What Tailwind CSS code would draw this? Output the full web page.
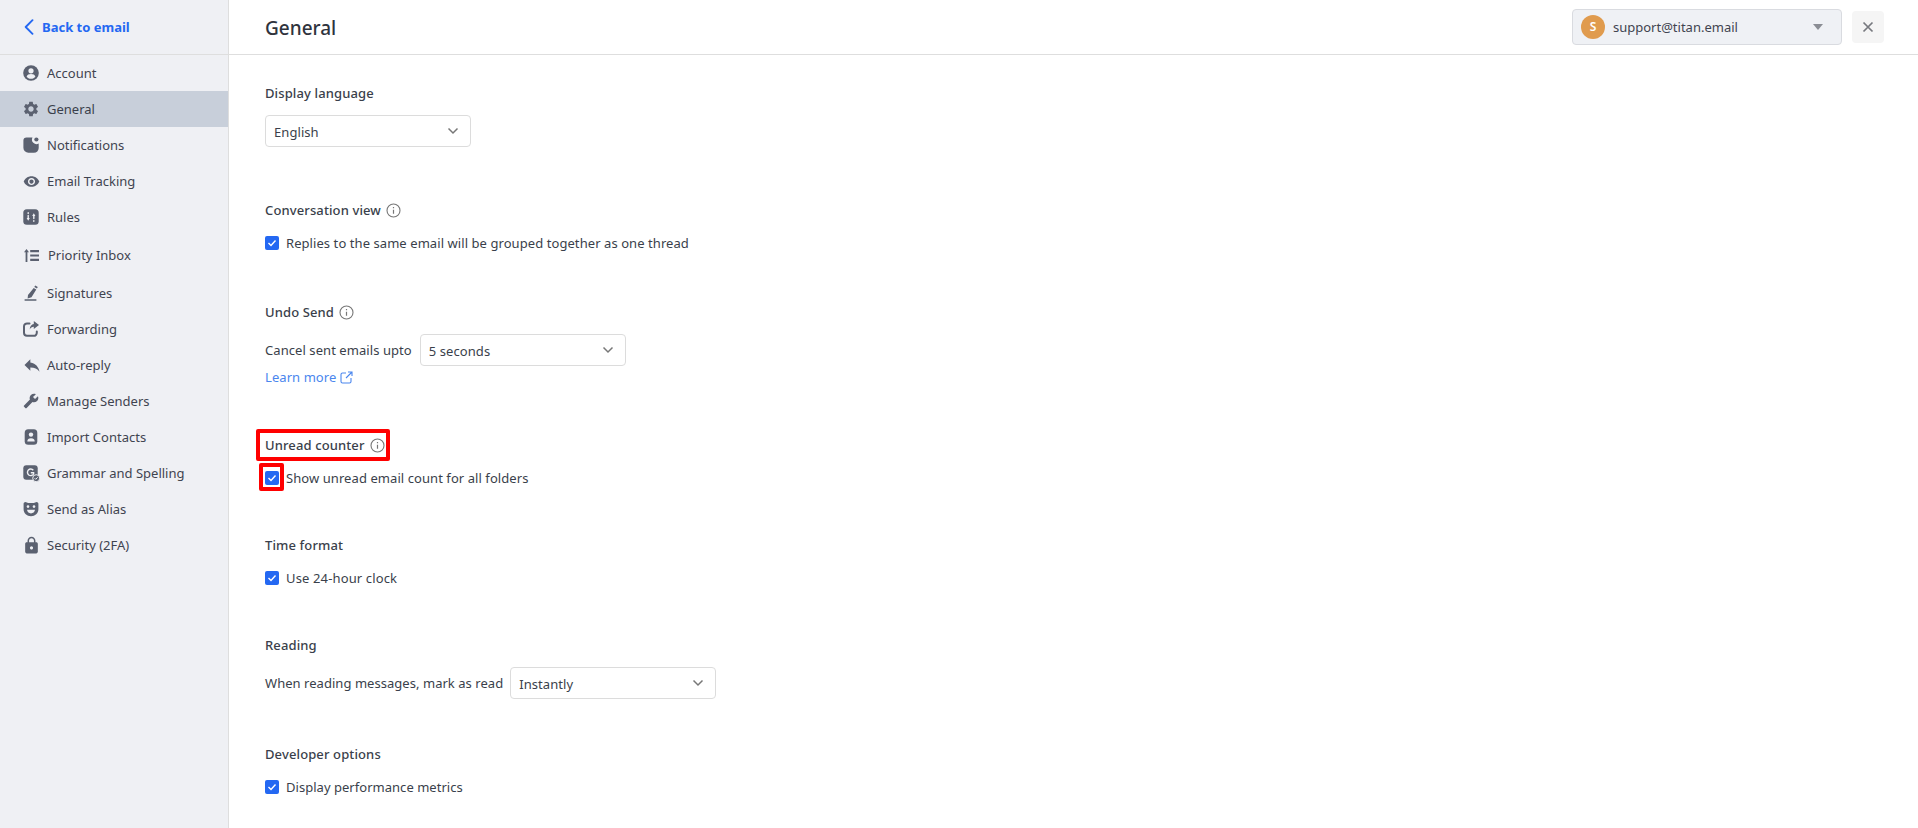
<!DOCTYPE html>
<html lang="en">
<head>
<meta charset="utf-8">
<title>General</title>
<script src="https://cdn.jsdelivr.net/npm/@tailwindcss/browser@4"></script>
</head>
<body class="bg-white font-['Noto_Sans','Liberation_Sans',sans-serif] text-[13px] leading-5 text-[#3a3f4b] overflow-hidden">
<div class="flex h-[828px] w-[1918px]">
  <aside class="w-[229px] shrink-0 h-full bg-[#eff0f4] border-r border-[#dedede]">
    <a class="h-[55px] flex items-center gap-[8px] pl-[24px] border-b border-[#dedede] text-[#2468f2] font-bold">
      <svg width="10" height="16" viewBox="0 0 10 16" fill="none" stroke="#2468f2" stroke-width="1.900" stroke-linecap="round" stroke-linejoin="round"><path d="M8.500 1.200 1.700 8l6.800 6.800"/></svg>
      <span>Back to email</span>
    </a>
    <nav class="flex flex-col">
      <a class="h-9 flex items-center gap-[8px] pl-[23px] text-[#3f4450]"><svg class="w-4 h-4 shrink-0" viewBox="0 0 16 16"><circle cx="8" cy="8" r="7.800" fill="#5b6170"/><circle cx="8" cy="5.800" r="2.600" fill="#eff0f4"/><path d="M3.600 11.400c.6-1.700 2.100-2.500 4.400-2.500s3.800.8 4.400 2.500c-.9 1.500-2.500 2.400-4.400 2.400s-3.500-.9-4.400-2.400z" fill="#eff0f4"/></svg><span>Account</span></a>
      <a class="h-9 flex items-center gap-[7px] pl-[22px] bg-[#c8cfda] text-[#3a3f4b]"><svg class="w-[18px] h-[18px] shrink-0" viewBox="0 0 24 24" fill="#5b6170"><path d="M19.140 12.940c.04-.3.06-.61.06-.94 0-.32-.02-.64-.07-.94l2.030-1.580c.18-.14.23-.41.12-.61l-1.920-3.320c-.12-.22-.37-.29-.59-.22l-2.390.96c-.5-.38-1.030-.7-1.620-.94l-.36-2.540c-.04-.24-.24-.41-.48-.41h-3.840c-.24 0-.43.17-.47.41l-.36 2.540c-.59.24-1.130.57-1.620.94l-2.390-.96c-.22-.08-.47 0-.59.22L2.740 8.870c-.12.21-.08.47.12.61l2.030 1.580c-.05.3-.09.63-.09.94s.02.64.07.94l-2.030 1.580c-.18.14-.23.41-.12.61l1.920 3.320c.12.22.37.29.59.22l2.390-.96c.5.38 1.030.7 1.620.94l.36 2.540c.05.24.24.41.48.41h3.840c.24 0 .44-.17.47-.41l.36-2.540c.59-.24 1.130-.56 1.620-.94l2.390.96c.22.08.47 0 .59-.22l1.920-3.320c.12-.22.07-.47-.12-.61l-2.010-1.580zM12 15.600c-1.980 0-3.600-1.620-3.600-3.600s1.620-3.600 3.600-3.600 3.600 1.620 3.600 3.600-1.620 3.600-3.600 3.600z"/></svg><span>General</span></a>
      <a class="h-9 flex items-center gap-[8px] pl-[23px] text-[#3f4450]"><svg class="w-4 h-4 shrink-0" viewBox="0 0 16 16" fill="#5b6170"><path d="M3.500.4h6a4.600 4.600 0 0 0 6.200 6.200V11a4.800 4.800 0 0 1-4.800 4.800H5.400A5 5 0 0 1 .4 10.800V3.500A3.100 3.100 0 0 1 3.500.4z"/><circle cx="13.400" cy="2.500" r="2.100"/></svg><span>Notifications</span></a>
      <a class="h-9 flex items-center gap-[7px] pl-[23px] text-[#3f4450]"><svg class="w-[17px] h-[17px] shrink-0" viewBox="0 0 24 24" fill="#5b6170"><path d="M12 4.500C7 4.500 2.730 7.610 1 12c1.730 4.390 6 7.500 11 7.500s9.270-3.110 11-7.500c-1.730-4.390-6-7.500-11-7.500zM12 17c-2.760 0-5-2.240-5-5s2.240-5 5-5 5 2.240 5 5-2.240 5-5 5zm0-8c-1.660 0-3 1.340-3 3s1.340 3 3 3 3-1.340 3-3-1.340-3-3-3z"/></svg><span>Email Tracking</span></a>
      <a class="h-9 flex items-center gap-[8px] pl-[23px] text-[#3f4450]"><svg class="w-4 h-4 shrink-0" viewBox="0 0 16 16"><rect x=".3" y=".3" width="15.400" height="15.400" rx="3.500" fill="#5b6170"/><path d="M5.200 3.800v.6M5.200 6.500v3M10.800 6.500v3M10.800 11.600v.6" stroke="#eff0f4" stroke-width="1.400" stroke-linecap="round" fill="none"/><path d="M3.600 9h3.200l-1.600 2.800zM9.200 7h3.200l-1.600-2.800z" fill="#eff0f4"/></svg><span>Rules</span></a>
      <a class="h-[38px] mt-px flex items-center gap-[9px] pl-[24px] text-[#3f4450]"><svg class="w-[15px] h-[13px] shrink-0" viewBox="0 0 15 13" fill="#5b6170"><path d="M2.500 0 5 3.200H3.400V13H1.600V3.200H0zM6.200 1h8.800v2.200H6.200zM6.200 5.400h8.800v2.200H6.200zM6.200 9.800h8.800V12H6.200z"/></svg><span>Priority Inbox</span></a>
      <a class="h-9 mt-px flex items-center gap-[8px] pl-[23px] text-[#3f4450]"><svg class="w-4 h-4 shrink-0" viewBox="0 0 16 16" fill="#5b6170"><path d="M12.200.4 14.800 2l-.9 1.500-2.600-1.600zM10.700 3l2.600 1.600-4.800 7.600-3.900 1.200.4-3.300zM1.600 14.200h11.800v1.500H1.600z"/></svg><span>Signatures</span></a>
      <a class="h-9 flex items-center gap-[8px] pl-[23px] text-[#3f4450]"><svg class="w-4 h-4 shrink-0" viewBox="0 0 16 16" fill="none"><path d="M6.500 2.400H4A3 3 0 0 0 1 5.400v6.400a3 3 0 0 0 3 3h6.800a3 3 0 0 0 3-3V10.500" stroke="#5b6170" stroke-width="2" stroke-linecap="round"/><path d="M10.800 0 16 4l-5.200 4V5.700c-1.800 0-3.200.8-4.100 2.700.2-3.200 1.800-5.200 4.100-5.500z" fill="#5b6170"/></svg><span>Forwarding</span></a>
      <a class="h-9 flex items-center gap-[5px] pl-[22px] text-[#3f4450]"><svg class="w-5 h-5 shrink-0" viewBox="0 0 24 24" fill="#5b6170"><path d="M10 9V5l-7 7 7 7v-4.100c5 0 8.500 1.600 11 5.100-1-5-4-10-11-11z"/></svg><span>Auto-reply</span></a>
      <a class="h-9 flex items-center gap-[8px] pl-[23px] text-[#3f4450]"><svg class="w-4 h-4 shrink-0 -scale-x-100" viewBox="0 0 24 24" fill="#5b6170"><path d="M22.700 19l-9.100-9.100c.9-2.300.4-5-1.500-6.900-2-2-5-2.400-7.400-1.300L9 6 6 9 1.600 4.700C.4 7.100.9 10.100 2.900 12.100c1.900 1.900 4.600 2.400 6.900 1.500l9.100 9.100c.4.400 1 .4 1.400 0l2.300-2.300c.5-.4.5-1.100.1-1.400z"/></svg><span>Manage Senders</span></a>
      <a class="h-9 flex items-center gap-[8px] pl-[23px] text-[#3f4450]"><svg class="w-4 h-4 shrink-0" viewBox="0 0 16 16"><rect x="1.700" y=".3" width="12.600" height="15.400" rx="3.500" fill="#5b6170"/><circle cx="8" cy="5.600" r="2.200" fill="#eff0f4"/><path d="M4.300 12.400c0-2.200 1.400-3.200 3.700-3.200s3.700 1 3.700 3.200z" fill="#eff0f4"/></svg><span>Import Contacts</span></a>
      <a class="h-9 flex items-center gap-[8px] pl-[23px] text-[#3f4450]"><svg class="w-4 h-4 shrink-0 overflow-visible" viewBox="0 0 16 16"><rect x=".3" y=".3" width="14.400" height="14.400" rx="3" fill="#5b6170"/><path d="M10.300 5.200A3.300 3.300 0 1 0 10.600 9V7.800H7.800" stroke="#eff0f4" stroke-width="1.400" fill="none"/><circle cx="13.200" cy="13.200" r="3.500" fill="#5b6170" stroke="#eff0f4" stroke-width="1"/><path d="m11.600 13.200 1.100 1.100 2-2" stroke="#eff0f4" stroke-width="1" fill="none"/></svg><span>Grammar and Spelling</span></a>
      <a class="h-9 flex items-center gap-[8px] pl-[23px] text-[#3f4450]"><svg class="w-4 h-4 shrink-0" viewBox="0 0 16 16"><path d="M2.500.9c1.800.9 3.500 1.200 5.500 1.200S11.700 1.800 13.500.9c1 0 1.900.7 1.900 1.800v5.500c0 4-3.300 7-7.400 7S.6 12.200.6 8.200V2.700C.6 1.600 1.500.9 2.500.9z" fill="#5b6170"/><circle cx="5" cy="5.600" r="1.300" fill="#eff0f4"/><circle cx="11" cy="5.600" r="1.300" fill="#eff0f4"/><path d="M4 8.800h8c-.3 2.200-2 3.600-4 3.600s-3.700-1.400-4-3.600z" fill="#eff0f4"/></svg><span>Send as Alias</span></a>
      <a class="h-9 flex items-center gap-[6px] pl-[22px] text-[#3f4450]"><svg class="w-[19px] h-[19px] shrink-0" viewBox="0 0 24 24" fill="#5b6170"><path d="M18 8h-1V6c0-2.760-2.240-5-5-5S7 3.240 7 6v2H6c-1.100 0-2 .9-2 2v10c0 1.100.9 2 2 2h12c1.100 0 2-.9 2-2V10c0-1.100-.9-2-2-2zm-6 9c-1.100 0-2-.9-2-2s.9-2 2-2 2 .9 2 2-.9 2-2 2zm3.100-9H8.900V6c0-1.710 1.390-3.100 3.100-3.100 1.710 0 3.100 1.390 3.100 3.100v2z"/></svg><span>Security (2FA)</span></a>
    </nav>
  </aside>

  <div class="flex-1 min-w-0 flex flex-col">
    <header class="h-[55px] shrink-0 border-b border-[#dedede] flex items-center pl-[36px] pr-[34px]">
      <h1 class="text-[19px] leading-6 font-medium text-[#2f333d] pt-[1px]">General</h1>
      <div class="ml-auto flex items-center gap-[10px]">
        <div class="w-[270px] h-[36px] rounded-[4px] border border-[#d9dbe0] bg-[#eff1f5] flex items-center pl-[8px] pr-[17px]">
          <span class="w-6 h-6 rounded-full bg-[#e09b4e] text-white font-semibold text-[12px] flex items-center justify-center">S</span>
          <span class="ml-[8px] text-[#3f4450]">support@titan.email</span>
          <svg class="ml-auto" width="12" height="6" viewBox="0 0 12 6"><path d="M1 0h10L6 6z" fill="#8a8d94"/></svg>
        </div>
        <button class="w-8 h-8 rounded-[4px] bg-[#f5f5f5] flex items-center justify-center">
          <svg width="12" height="12" viewBox="0 0 12 12" fill="none" stroke="#77797f" stroke-width="1.700"><path d="m1.500 1.500 9 9M10.500 1.500l-9 9"/></svg>
        </button>
      </div>
    </header>

    <main class="pl-[36px] pt-[28px] flex flex-col items-start tracking-[0.07px]">
      <h2 class="font-medium tracking-[0.12px]">Display language</h2>
      <div class="mt-[12px] w-[206px] h-[32px] rounded-[4px] border border-[#dcdcdc] flex items-center justify-between pl-[8px] pr-[11px]"><span class="pt-[1px]">English</span><svg width="12" height="8" viewBox="0 0 12 8" fill="none" stroke="#777" stroke-width="1.500"><path d="m1.500 1.500 4.500 4.500 4.500-4.500"/></svg></div>

      <h2 class="mt-[53px] font-medium tracking-[0.12px] flex items-center gap-[5px]">Conversation view <svg width="15" height="15" viewBox="0 0 15 15" fill="none" stroke="#777"><circle cx="7.500" cy="7.500" r="6.500" stroke-width="1.100"/><path d="M7.500 6.800v4M7.500 4v1.300" stroke-width="1.200"/></svg></h2>
      <label class="mt-[13px] flex items-center gap-[7px]"><span class="w-[14px] h-[14px] rounded-[2px] bg-[#2468f2] flex items-center justify-center"><svg width="10" height="8" viewBox="0 0 10 8" fill="none" stroke="#fff" stroke-width="1.400"><path d="m1.500 4 2.500 2.500 4.500-5"/></svg></span><span>Replies to the same email will be grouped together as one thread</span></label>

      <h2 class="mt-[49px] font-medium tracking-[0.12px] flex items-center gap-[5px]">Undo Send <svg width="15" height="15" viewBox="0 0 15 15" fill="none" stroke="#777"><circle cx="7.500" cy="7.500" r="6.500" stroke-width="1.100"/><path d="M7.500 6.800v4M7.500 4v1.300" stroke-width="1.200"/></svg></h2>
      <div class="mt-[12px] flex items-center gap-[8px]"><span>Cancel sent emails upto</span><div class="w-[206px] h-[32px] rounded-[4px] border border-[#dcdcdc] flex items-center justify-between pl-[8px] pr-[11px]"><span class="pt-[1px]">5 seconds</span><svg width="12" height="8" viewBox="0 0 12 8" fill="none" stroke="#777" stroke-width="1.500"><path d="m1.500 1.500 4.500 4.500 4.500-4.500"/></svg></div></div>
      <a class="mt-px flex items-center gap-[4px] text-[#4a86ee]">Learn more <svg width="13" height="13" viewBox="0 0 13 13" fill="none" stroke="#4a86ee" stroke-width="1.100"><path d="M6 2H2.500A1.500 1.500 0 0 0 1 3.500v7A1.500 1.500 0 0 0 2.500 12h7a1.500 1.500 0 0 0 1.500-1.500V7M8 1h4v4M12 1 6 7"/></svg></a>

      <h2 class="relative mt-[48px] font-medium tracking-[0.12px] flex items-center gap-[5px]">Unread counter <svg width="15" height="15" viewBox="0 0 15 15" fill="none" stroke="#777"><circle cx="7.500" cy="7.500" r="6.500" stroke-width="1.100"/><path d="M7.500 6.800v4M7.500 4v1.300" stroke-width="1.200"/></svg><span class="absolute left-[-9px] top-[-6px] w-[134px] h-[32px] border-[4px] border-[#ff0000] rounded-[2px]"></span></h2>
      <label class="relative mt-[13px] flex items-center gap-[7px]"><span class="w-[14px] h-[14px] rounded-[2px] bg-[#2468f2] flex items-center justify-center"><svg width="10" height="8" viewBox="0 0 10 8" fill="none" stroke="#fff" stroke-width="1.400"><path d="m1.500 4 2.500 2.500 4.500-5"/></svg></span><span>Show unread email count for all folders</span><span class="absolute left-[-6px] top-[-5px] w-[25px] h-[28px] border-[4px] border-[#ff0000] rounded-[2px]"></span></label>

      <h2 class="mt-[47px] font-medium tracking-[0.12px]">Time format</h2>
      <label class="mt-[13px] flex items-center gap-[7px]"><span class="w-[14px] h-[14px] rounded-[2px] bg-[#2468f2] flex items-center justify-center"><svg width="10" height="8" viewBox="0 0 10 8" fill="none" stroke="#fff" stroke-width="1.400"><path d="m1.500 4 2.500 2.500 4.500-5"/></svg></span><span class="tracking-[0.14px]">Use 24-hour clock</span></label>

      <h2 class="mt-[47px] font-medium tracking-[0.12px]">Reading</h2>
      <div class="mt-[12px] flex items-center gap-[7px]"><span class="tracking-[0.04px]">When reading messages, mark as read</span><div class="w-[206px] h-[32px] rounded-[4px] border border-[#dcdcdc] flex items-center justify-between pl-[8px] pr-[11px]"><span class="pt-[1px]">Instantly</span><svg width="12" height="8" viewBox="0 0 12 8" fill="none" stroke="#777" stroke-width="1.500"><path d="m1.500 1.500 4.500 4.500 4.500-4.500"/></svg></div></div>

      <h2 class="mt-[45px] font-medium tracking-[0.12px]">Developer options</h2>
      <label class="mt-[13px] flex items-center gap-[7px]"><span class="w-[14px] h-[14px] rounded-[2px] bg-[#2468f2] flex items-center justify-center"><svg width="10" height="8" viewBox="0 0 10 8" fill="none" stroke="#fff" stroke-width="1.400"><path d="m1.500 4 2.500 2.500 4.500-5"/></svg></span><span class="tracking-[0.03px]">Display performance metrics</span></label>
    </main>
  </div>
</div>
</body>
</html>
